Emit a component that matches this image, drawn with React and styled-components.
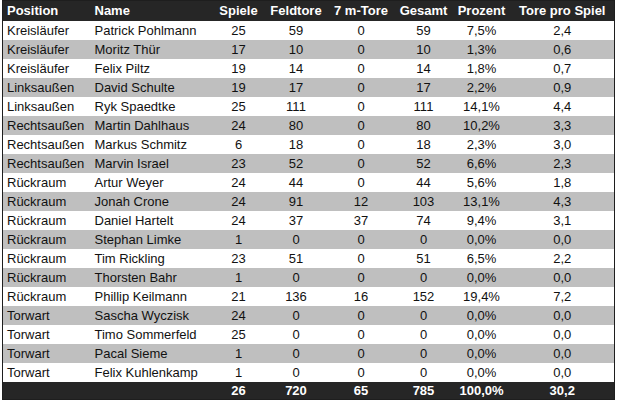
import React from "react";
import styled, { createGlobalStyle } from "styled-components";

const GlobalStyle = createGlobalStyle`
  html, body {
    margin: 0;
    padding: 0;
    background: #ffffff;
  }
  body {
    font-family: "Liberation Sans", Arial, sans-serif;
  }
`;

const Wrap = styled.div`
  padding: 0 0 0 2px;
`;

const Table = styled.table`
  border-collapse: collapse;
  table-layout: fixed;
  width: 612px;
  border: 1px solid #1e1e1e;
  font-size: 13px;
  color: #111;
`;

const HeadRow = styled.tr`
  height: 20px;
  background: #262626;
  color: #ffffff;
  font-weight: bold;
`;

const Row = styled.tr`
  height: 19px;
  background: ${(p) => (p.$shaded ? "#bfbfbf" : "#ffffff")};
`;

const TotalRow = styled.tr`
  height: 18px;
  background: #262626;
  color: #ffffff;
  font-weight: bold;
`;

const Cell = styled.td`
  padding: 0 0 0 ${(p) => (p.$left ? "4px" : "0")};
  text-align: ${(p) => (p.$left ? "left" : "center")};
  white-space: nowrap;
  line-height: 15px;
  vertical-align: middle;
`;

const cols = [88, 122, 52, 63, 67, 58, 58, 104];

const head = ["Position", "Name", "Spiele", "Feldtore", "7 m-Tore", "Gesamt", "Prozent", "Tore pro Spiel"];

const players = [
  ["Kreisläufer", "Patrick Pohlmann", 25, 59, 0, 59, "7,5%", "2,4"],
  ["Kreisläufer", "Moritz Thür", 17, 10, 0, 10, "1,3%", "0,6"],
  ["Kreisläufer", "Felix Piltz", 19, 14, 0, 14, "1,8%", "0,7"],
  ["Linksaußen", "David Schulte", 19, 17, 0, 17, "2,2%", "0,9"],
  ["Linksaußen", "Ryk Spaedtke", 25, 111, 0, 111, "14,1%", "4,4"],
  ["Rechtsaußen", "Martin Dahlhaus", 24, 80, 0, 80, "10,2%", "3,3"],
  ["Rechtsaußen", "Markus Schmitz", 6, 18, 0, 18, "2,3%", "3,0"],
  ["Rechtsaußen", "Marvin Israel", 23, 52, 0, 52, "6,6%", "2,3"],
  ["Rückraum", "Artur Weyer", 24, 44, 0, 44, "5,6%", "1,8"],
  ["Rückraum", "Jonah Crone", 24, 91, 12, 103, "13,1%", "4,3"],
  ["Rückraum", "Daniel Hartelt", 24, 37, 37, 74, "9,4%", "3,1"],
  ["Rückraum", "Stephan Limke", 1, 0, 0, 0, "0,0%", "0,0"],
  ["Rückraum", "Tim Rickling", 23, 51, 0, 51, "6,5%", "2,2"],
  ["Rückraum", "Thorsten Bahr", 1, 0, 0, 0, "0,0%", "0,0"],
  ["Rückraum", "Phillip Keilmann", 21, 136, 16, 152, "19,4%", "7,2"],
  ["Torwart", "Sascha Wyczisk", 24, 0, 0, 0, "0,0%", "0,0"],
  ["Torwart", "Timo Sommerfeld", 25, 0, 0, 0, "0,0%", "0,0"],
  ["Torwart", "Pacal Sieme", 1, 0, 0, 0, "0,0%", "0,0"],
  ["Torwart", "Felix Kuhlenkamp", 1, 0, 0, 0, "0,0%", "0,0"],
];

const totals = ["", "", 26, 720, 65, 785, "100,0%", "30,2"];

export default function App() {
  return (
    <Wrap>
      <GlobalStyle />
      <Table>
        <colgroup>
          {cols.map((w, i) => (
            <col key={i} style={{ width: w }} />
          ))}
        </colgroup>
        <thead>
          <HeadRow>
            {head.map((h, i) => (
              <Cell as="th" key={h} $left={i < 2}>
                {h}
              </Cell>
            ))}
          </HeadRow>
        </thead>
        <tbody>
          {players.map((p, r) => (
            <Row key={p[1]} $shaded={r % 2 === 1}>
              {p.map((v, i) => (
                <Cell key={i} $left={i < 2}>
                  {v}
                </Cell>
              ))}
            </Row>
          ))}
          <TotalRow>
            {totals.map((v, i) => (
              <Cell key={i} $left={i < 2}>
                {v}
              </Cell>
            ))}
          </TotalRow>
        </tbody>
      </Table>
    </Wrap>
  );
}
